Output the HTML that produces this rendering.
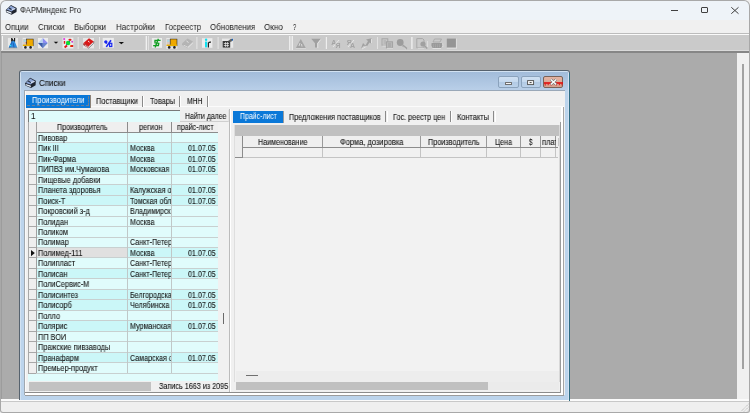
<!DOCTYPE html>
<html><head><meta charset="utf-8">
<style>
*{margin:0;padding:0;box-sizing:border-box}
html,body{width:750px;height:413px;overflow:hidden;background:#f0f0f0;font-family:"Liberation Sans",sans-serif;color:#000}
.a{position:absolute}
.t{position:absolute;white-space:nowrap;line-height:1;font-size:8px;will-change:transform;-webkit-text-stroke-width:0.1px}
svg{position:absolute;overflow:visible}
</style></head><body>
<div class="a" style="left:0px;top:0px;width:750px;height:413px;background:#a8a8a8;border-radius:6px 6px 3px 3px"></div>
<div class="a" style="left:1px;top:1px;width:748px;height:19px;background:#eef3f8;border-radius:5px 5px 0 0"></div>
<svg style="left:0;top:0" width="20" height="20" viewBox="0 0 20 20">
<path d="M5.8 10 L11 5 L16.7 8 L16.5 12 L11.5 14.7 L6 12.3 Z" fill="#1e2430"/>
<path d="M6.6 9.6 L11 5.8 L15.8 8.4 L11.4 11.6 Z" fill="#8ea6d6"/>
<path d="M6.3 10.6 L11.3 12.2 L11.5 14 L6.6 12 Z" fill="#e6eef8"/>
<path d="M11.8 9.4 L15.2 8.8" stroke="#f0f4fa" stroke-width="0.9"/>
<path d="M9 8 L11.5 9.5" stroke="#202838" stroke-width="1.1"/>
</svg>
<div class="t" style="left:20.30px;top:6.05px;font-size:8.5px;color:#1c1c1c;transform:scaleX(0.9053);transform-origin:0 0;-webkit-text-stroke-width:0">ФАРМиндекс Pro</div>
<div class="a" style="left:671px;top:10px;width:7px;height:1px;background:#404040"></div>
<div class="a" style="left:701px;top:7px;width:7px;height:6px;border:1px solid #404040;border-radius:1px"></div>
<svg style="left:731px;top:6.5px" width="8" height="7"><path d="M0.3 0.3L7.5 6.7M7.5 0.3L0.3 6.7" stroke="#404040" stroke-width="1"/></svg>
<div class="a" style="left:1px;top:20px;width:748px;height:13.1px;background:#f0f0f0"></div>
<div class="t" style="left:4.80px;top:22.67px;font-size:9px;color:#1a1a1a;transform:scaleX(0.8678);transform-origin:0 0;-webkit-text-stroke-width:0">Опции</div>
<div class="t" style="left:38.00px;top:22.67px;font-size:9px;color:#1a1a1a;transform:scaleX(0.8841);transform-origin:0 0;-webkit-text-stroke-width:0">Списки</div>
<div class="t" style="left:74.00px;top:22.67px;font-size:9px;color:#1a1a1a;transform:scaleX(0.8742);transform-origin:0 0;-webkit-text-stroke-width:0">Выборки</div>
<div class="t" style="left:115.90px;top:22.67px;font-size:9px;color:#1a1a1a;transform:scaleX(0.8815);transform-origin:0 0;-webkit-text-stroke-width:0">Настройки</div>
<div class="t" style="left:164.70px;top:22.67px;font-size:9px;color:#1a1a1a;transform:scaleX(0.8487);transform-origin:0 0;-webkit-text-stroke-width:0">Госреестр</div>
<div class="t" style="left:210.00px;top:22.67px;font-size:9px;color:#1a1a1a;transform:scaleX(0.8740);transform-origin:0 0;-webkit-text-stroke-width:0">Обновления</div>
<div class="t" style="left:264.00px;top:22.67px;font-size:9px;color:#1a1a1a;transform:scaleX(0.8988);transform-origin:0 0;-webkit-text-stroke-width:0">Окно</div>
<div class="t" style="left:292.70px;top:22.67px;font-size:9px;color:#1a1a1a;transform:scaleX(0.6395);transform-origin:0 0;-webkit-text-stroke-width:0">?</div>
<div class="a" style="left:1px;top:33.1px;width:748px;height:0.8px;background:#bcbcbc"></div>
<div class="a" style="left:1px;top:33.9px;width:748px;height:0.8px;background:#fafafa"></div>
<div class="a" style="left:1px;top:34.7px;width:748px;height:15.1px;background:#cacaca"></div>
<div class="a" style="left:1px;top:49.8px;width:748px;height:1px;background:#dadada"></div>
<div class="a" style="left:1px;top:50.8px;width:748px;height:0.6px;background:#c4c4c4"></div>
<div class="a" style="left:1px;top:51.4px;width:748px;height:1.2px;background:#868686"></div>
<svg style="left:0;top:0" width="750" height="60" viewBox="0 0 750 60">
<!-- grips -->
<rect x="2" y="36" width="1" height="14" fill="#f4f4f4"/>
<rect x="145.7" y="36" width="1.2" height="14" fill="#f4f4f4"/><rect x="148" y="36" width="1" height="14" fill="#e0e0e0"/>
<rect x="289.2" y="36" width="1.2" height="14" fill="#f4f4f4"/><rect x="291.6" y="36" width="1.2" height="14" fill="#f4f4f4"/>
<!-- separators -->
<rect x="77.7" y="37" width="1" height="12" fill="#e6e6e6"/>
<rect x="99" y="37" width="1" height="12" fill="#e6e6e6"/>
<rect x="196.4" y="37" width="1" height="12" fill="#e6e6e6"/>
<rect x="217.6" y="37" width="1" height="12" fill="#e6e6e6"/>
<rect x="325.8" y="37" width="1.2" height="12" fill="#eeeeee"/>
<rect x="377" y="37" width="1" height="12" fill="#e2e2e2"/>
<rect x="411.2" y="37" width="1.4" height="12" fill="#eeeeee"/>
<!-- 1 flask -->
<rect x="7.9" y="37.9" width="10.1" height="9.8" fill="#e8e8e8"/>
<path d="M11.8 40.6 L14.4 40.6 L17.3 47.7 L8.7 47.7 Z" fill="#2f8ce0"/>
<path d="M12 42 L9.6 47.5 M13.2 43 L14 47.5" stroke="#1c5cb0" stroke-width="0.9"/>
<circle cx="10.4" cy="45.5" r="0.8" fill="#30e8f0"/>
<path d="M11.7 38 L11.7 41.4 M14.6 38 L14.6 41.4 M11.7 38.4 L13.4 41" stroke="#141414" stroke-width="1.1"/>
<path d="M8.7 47.8 L17.3 47.8" stroke="#707070" stroke-width="0.5"/>
<!-- 2 truck -->
<rect x="22.6" y="37.8" width="10.8" height="11" fill="#e8e8e8"/>
<path d="M23.2 39 L26.8 39 L26.8 45.8 L23.2 45.8 Z" fill="#d8c8c0"/>
<rect x="23.6" y="39.6" width="2.2" height="2.4" fill="#a8d8e8"/>
<rect x="25.8" y="42" width="1" height="1.4" fill="#e02020"/>
<rect x="26.6" y="39" width="6.6" height="6.8" fill="#f0a800" stroke="#222" stroke-width="0.6"/>
<rect x="22.8" y="44.6" width="10.4" height="1.4" fill="#e8b000"/>
<circle cx="25.4" cy="47.4" r="1.3" fill="#222"/><circle cx="30.6" cy="47.4" r="1.3" fill="#222"/>
<!-- 3 diamond -->
<rect x="38" y="38" width="10" height="10.3" fill="#ececec"/>
<path d="M42.8 38 L38 43 L42.8 43 Z" fill="#b8d2f0"/>
<path d="M42.8 38 L47.8 43 L42.8 43 Z" fill="#8c8cf2"/>
<path d="M38 43 L42.8 48.3 L42.8 43 Z" fill="#3a5aa8"/>
<path d="M47.8 43 L42.8 48.3 L42.8 43 Z" fill="#6a86d0"/>
<path d="M53.7 41.7 L58.2 41.7 L56 43.8 Z" fill="#111"/>
<!-- 4 molecule -->
<rect x="62.5" y="37.6" width="10.9" height="10.9" fill="#ececec"/>
<circle cx="64.2" cy="39.1" r="1.1" fill="#e040e0"/>
<ellipse cx="70" cy="39.8" rx="1.6" ry="1.1" fill="#e01818"/>
<rect x="63.8" y="41" width="1.4" height="2.8" fill="#e01818"/>
<circle cx="68.1" cy="43" r="2.2" fill="#10e030"/>
<circle cx="66.6" cy="44.6" r="0.5" fill="#1840c0"/><circle cx="69.4" cy="41.4" r="0.5" fill="#1840c0"/>
<circle cx="72.2" cy="41.7" r="1" fill="#d040d0"/>
<path d="M64.6 47.6 L67 45.6" stroke="#e01818" stroke-width="2"/>
<rect x="70.2" y="45" width="3" height="2" fill="#e02018"/>
<circle cx="70.6" cy="45.2" r="0.5" fill="#f0c000"/>
<!-- 5 red book -->
<rect x="83" y="38" width="11" height="10.3" fill="#e6e6e6"/>
<path d="M83.5 43 L89 38.3 L93.8 41.5 L88.5 46.5 Z" fill="#d81818"/>
<path d="M83.5 43 L88.5 46.5 L88.5 48.2 L83.3 45 Z" fill="#a01010"/>
<path d="M84.5 45 L88.4 47.4 L93.5 43" stroke="#ffffff" stroke-width="0.7" fill="none"/>
<path d="M93.8 41.5 L93.6 43.3 L88.5 48.2" stroke="#505050" stroke-width="0.7" fill="none"/>
<path d="M88 41 L89.5 42.2" stroke="#fff" stroke-width="0.9"/>
<!-- 6 percent -->
<rect x="102.7" y="37.9" width="11.2" height="9.8" fill="#ececec"/>
<circle cx="105.9" cy="41.8" r="1.6" fill="#1a28f0"/>
<path d="M104.6 41.6 L106.8 43.6" stroke="#1a28f0" stroke-width="1.3"/>
<path d="M111 40.2 L106.3 46.9" stroke="#1a28f0" stroke-width="1.6"/>
<rect x="109.6" y="43.3" width="2.2" height="3.2" fill="none" stroke="#1a28f0" stroke-width="1.2"/>
<path d="M118.7 42 L124 42 L121.4 44.3 Z" fill="#111"/>
<!-- 7 dollar -->
<rect x="151.9" y="38" width="10.1" height="9.9" fill="#ececec"/>
<path d="M153.4 45.8 L157.6 44.2 M154.3 41.5 L157 40.5" stroke="#a8a8b8" stroke-width="1"/>
<path d="M160.6 40.4 H155 V42.8 L158.8 43.2 L158.4 45.6 H153.2" stroke="#10a020" stroke-width="1.3" fill="none"/>
<path d="M158.4 38.8 L155.1 47.6" stroke="#10a020" stroke-width="1.3"/>
<!-- 8 truck -->
<rect x="166.3" y="38" width="11" height="10.8" fill="#e8e8e8"/>
<path d="M166.8 39 L170.4 39 L170.4 45.8 L166.8 45.8 Z" fill="#d8c8c0"/>
<rect x="167.2" y="39.6" width="2.2" height="2.4" fill="#a8d8e8"/>
<rect x="170.2" y="39" width="6.8" height="6.8" fill="#f0a800" stroke="#222" stroke-width="0.6"/>
<rect x="166.5" y="44.6" width="10.6" height="1.4" fill="#e8b000"/>
<circle cx="169.2" cy="47.4" r="1.3" fill="#222"/><circle cx="174.4" cy="47.4" r="1.3" fill="#222"/>
<!-- 9 gray book disabled -->
<path d="M182.5 43 L187.5 38.5 L193 41.5 L188 46.5 Z" fill="#b4b4b4"/>
<path d="M182.5 43 L188 46.5 L188 48.2 L182.3 45 Z" fill="#a8a8a8"/>
<path d="M183.5 45 L188 47.4 L192.8 43" stroke="#f0f0f0" stroke-width="0.7" fill="none"/>
<path d="M186.5 41 L188.5 42.5" stroke="#e8e8e8" stroke-width="0.9"/>
<!-- 10 info -->
<rect x="202" y="38.2" width="10.4" height="9.6" fill="#ececec"/>
<rect x="205" y="41.6" width="2.2" height="5.8" fill="#10e0f0"/>
<circle cx="206.1" cy="39.8" r="1.2" fill="#10e0f0"/>
<path d="M208.4 47.4 L208.4 43 Q209 42 211 42.2" stroke="#222" stroke-width="1.2" fill="none"/>
<!-- 11 calc -->
<rect x="222" y="38.6" width="11.2" height="9.2" fill="#e8e8e8"/>
<rect x="222.6" y="41" width="7.6" height="6.6" fill="#3a3a3a"/>
<path d="M223.8 43.5 H229 M223.8 45.5 H229 M225.6 42 V47 M227.6 42 V47" stroke="#f0f0f0" stroke-width="0.7"/>
<path d="M228 41 L231 38.8 L233 39.6 L231 42" fill="#606060"/>
<rect x="231.8" y="38.8" width="1.2" height="1.8" fill="#1060c0"/>
<!-- 12 triangle -->
<path d="M300.8 39 L306 48.4 L295.6 48.4 Z" fill="#a4a4a4"/>
<path d="M300 43 L299 46 M301.5 44 L302 46.5" stroke="#e8e8e8" stroke-width="0.8"/>
<path d="M295.6 48.6 L306 48.6" stroke="#f0f0f0" stroke-width="0.6"/>
<!-- 13 funnel -->
<path d="M311.2 38.8 L320.8 38.8 L317 43.2 L317 47.6 L315 47.6 L315 43.2 Z" fill="#a0a0a0"/>
<path d="M320.8 39.5 L317.8 43.5 L317.8 48" stroke="#eeeeee" stroke-width="0.7" fill="none"/>
<!-- 14 sort AZ -->
<text x="331.2" y="45.2" font-family="Liberation Sans" font-size="7" font-weight="bold" fill="#a4a4a4">A</text>
<text x="335.6" y="48" font-family="Liberation Sans" font-size="7" font-weight="bold" fill="#a4a4a4">Я</text>
<path d="M333 47 L339 40" stroke="#eeeeee" stroke-width="0.8"/>
<!-- 15 sort 2 -->
<text x="346.7" y="45" font-family="Liberation Sans" font-size="7" font-weight="bold" fill="#a4a4a4">Я</text>
<text x="350" y="48.4" font-family="Liberation Sans" font-size="7" font-weight="bold" fill="#a4a4a4">A</text>
<path d="M348 47 L354 40" stroke="#eeeeee" stroke-width="0.8"/>
<!-- 16 diagonal arrow -->
<path d="M361 48.5 L363 43 L365.5 45.5 L368 41 L366 39.5 L371.5 38.3 L371 43.5 L369.5 42.5 L366.5 47 L364 45.5 Z" fill="#a0a0a0"/>
<path d="M362 49 L367 46 M371.5 39 L371.5 43" stroke="#eeeeee" stroke-width="0.7"/>
<!-- 17 copy -->
<rect x="382" y="38.8" width="5.8" height="6.4" fill="none" stroke="#a6a6a6" stroke-width="1"/>
<rect x="386.4" y="41.8" width="6.2" height="6" fill="#b8b8b8" stroke="#a0a0a0" stroke-width="0.9"/>
<path d="M383.5 41 H386 M383.5 43 H386 M388 44 H391 M388 46 H391" stroke="#909090" stroke-width="0.6"/>
<path d="M382.5 46 H386 M387 48.3 H393" stroke="#eeeeee" stroke-width="0.6"/>
<!-- 18 magnifier -->
<circle cx="400.2" cy="42.5" r="3.4" fill="#9c9c9c"/>
<path d="M402.6 45.2 L406.8 48.8" stroke="#a0a0a0" stroke-width="1.8"/>
<path d="M403.5 47 L406 49.3" stroke="#eeeeee" stroke-width="0.6"/>
<!-- 19 page preview -->
<path d="M416.8 38.6 L422.6 38.6 L424 40 L424 48 L416.8 48 Z" fill="none" stroke="#a8a8a8" stroke-width="1"/>
<circle cx="423" cy="44" r="2.6" fill="#a0a0a0"/>
<path d="M424.8 46 L427.2 48.5" stroke="#a0a0a0" stroke-width="1.3"/>
<path d="M417.5 48.6 H424 M427.6 41 V47" stroke="#eeeeee" stroke-width="0.6"/>
<!-- 20 printer -->
<path d="M434.5 39 L441.5 39 L440 42 L433 42 Z" fill="none" stroke="#a8a8a8" stroke-width="0.9"/>
<path d="M431.6 43 L441.8 43 L442.6 45.5 L441 48 L432.6 48 L431.4 45.5 Z" fill="#9a9a9a"/>
<path d="M433 45 H440 M433 46.8 H440" stroke="#b8b8b8" stroke-width="0.6" stroke-dasharray="1 1"/>
<path d="M432.5 48.5 H441 M442.8 43.5 V47" stroke="#eeeeee" stroke-width="0.6"/>
<!-- 21 square -->
<rect x="446.8" y="38.6" width="9.4" height="9.2" fill="#959595"/>
<path d="M446.8 48.1 H456.8 M456.4 38.6 V48.2" stroke="#eeeeee" stroke-width="0.7"/>
</svg>
<div class="a" style="left:1px;top:52.6px;width:736px;height:346px;background:#ababab"></div>
<div class="a" style="left:1px;top:52.6px;width:1.2px;height:346px;background:#9c9c9c"></div>
<div class="a" style="left:737px;top:52.6px;width:12px;height:346px;background:#f0f0f0"></div>
<div class="a" style="left:741.8px;top:63.8px;width:2px;height:305px;background:#a2a2a2"></div>
<div class="a" style="left:1px;top:398.5px;width:748px;height:2.5px;background:#fbfbfb"></div>
<div class="a" style="left:1px;top:401px;width:748px;height:1px;background:#c8c8c8"></div>
<div class="a" style="left:1px;top:402px;width:748px;height:10px;background:#efefef;border-radius:0 0 2px 2px"></div>
<svg style="left:738px;top:401px" width="11" height="11"><path d="M10.5 3 L3 10.5 M10.5 6 L6 10.5 M10.5 9 L9 10.5" stroke="#a8a8a8" stroke-width="0.9" stroke-dasharray="1 0.8"/></svg>
<div class="a" style="left:19.1px;top:70px;width:551px;height:330px;background:#56626e;border-radius:3px 3px 0 0"></div>
<div class="a" style="left:20.1px;top:71px;width:549px;height:329px;background:#d2e2f2;border-radius:2px 2px 0 0"></div>
<div class="a" style="left:20.900000000000002px;top:71.8px;width:547.4px;height:328px;background:#bcd4ec"></div>
<div class="a" style="left:20.900000000000002px;top:71.8px;width:547.4px;height:18.4px;background:linear-gradient(#a2bcda,#b9cfe8)"></div>
<div class="a" style="left:568.9px;top:73px;width:1.2px;height:328px;background:#2e6a80"></div>
<svg style="left:0;top:0" width="40" height="92" viewBox="0 0 40 92">
<path d="M25 83.3 L30.2 77.8 L35.8 80.8 L35.6 85.3 L31 88 L25.4 85.6 Z" fill="#1e2430"/>
<path d="M25.9 83 L30.3 78.6 L35 81.2 L30.6 84.6 Z" fill="#8ea6d6"/>
<path d="M25.6 84 L30.6 85.5 L30.9 87.2 L25.9 85.3 Z" fill="#e6eef8"/>
<path d="M31 82.4 L34.6 81.6" stroke="#f0f4fa" stroke-width="0.9"/>
<path d="M28.2 81 L30.8 82.6" stroke="#202838" stroke-width="1.1"/>
</svg>
<div class="t" style="left:38.60px;top:79.15px;font-size:8.5px;color:#151515;transform:scaleX(0.9361);transform-origin:0 0;">Списки</div>
<div class="a" style="left:498.3px;top:76.4px;width:20.5px;height:11.2px;background:linear-gradient(#cfe0f2 0%,#c4d8ee 50%,#b2cae4 51%,#bcd2ea 100%);border:1px solid #8aa2bc;border-radius:2px"></div>
<div class="a" style="left:520.7px;top:76.4px;width:20.3px;height:11.2px;background:linear-gradient(#cfe0f2 0%,#c4d8ee 50%,#b2cae4 51%,#bcd2ea 100%);border:1px solid #8aa2bc;border-radius:2px"></div>
<div class="a" style="left:543.1px;top:76.4px;width:20.3px;height:11.2px;background:linear-gradient(#e4b4a2 0%,#dcaa98 50%,#d49a88 51%,#d8a492 100%);border:1px solid #7a6258;border-radius:2px"></div>
<div class="a" style="left:505px;top:82.2px;width:7px;height:2.4px;background:#f4f4f4;border:0.7px solid #707070;border-radius:0.5px"></div>
<svg style="left:527px;top:79.5px" width="8" height="6"><rect x="0.6" y="0.6" width="6" height="4" fill="#f6f6f6" stroke="#505050" stroke-width="0.9"/><rect x="2.6" y="2" width="2" height="1.1" fill="#505050"/></svg>
<svg style="left:544px;top:81.6px" width="19" height="4"><path d="M0 1 H19" stroke="#e01010" stroke-width="1.6"/><path d="M1.2 1.5 V3.6 M4.2 1.5 V3.2 M7 1.5 V3.4 M12.4 1.5 V3.4 M15.4 1.5 V3.2 M18 1.5 V3.4" stroke="#e01818" stroke-width="1"/></svg>
<svg style="left:549.5px;top:79px" width="7" height="6"><path d="M0.8 0.5L6.2 5.5M6.2 0.5L0.8 5.5" stroke="#707070" stroke-width="2.4"/><path d="M0.8 0.5L6.2 5.5M6.2 0.5L0.8 5.5" stroke="#fff" stroke-width="1.4"/></svg>
<div class="a" style="left:24px;top:89.8px;width:540.6px;height:305.6px;background:#f0f0f0;border-top:1px solid #9aa8b8;border-left:0.7px solid #a0a8b0"></div>
<div class="a" style="left:24.7px;top:90.8px;width:0.9px;height:303px;background:#fafafa"></div>
<div class="a" style="left:26px;top:95px;width:64.7px;height:12.8px;background:#0a78d8"></div>
<div class="a" style="left:27.4px;top:96.2px;width:62px;height:9.4px;border-right:1px dashed #c08a60;border-bottom:1px dashed #c08a60;opacity:0.55"></div>
<div class="a" style="left:90.1px;top:95px;width:0.9px;height:12.8px;background:#8c8278"></div>
<div class="t" style="left:32.00px;top:96.50px;font-size:8.2px;color:#ffffff;transform:scaleX(0.8981);transform-origin:0 0;-webkit-text-stroke-width:0">Производители</div>
<div class="t" style="left:96.00px;top:98.00px;font-size:8.2px;color:#151515;transform:scaleX(0.9006);transform-origin:0 0;">Поставщики</div>
<div class="t" style="left:150.00px;top:98.00px;font-size:8.2px;color:#151515;transform:scaleX(0.8863);transform-origin:0 0;">Товары</div>
<div class="t" style="left:186.60px;top:98.00px;font-size:8.2px;color:#151515;transform:scaleX(0.8248);transform-origin:0 0;">МНН</div>
<div class="a" style="left:91px;top:106.4px;width:473px;height:0.9px;background:#fbfbfb"></div>
<div class="a" style="left:142px;top:95.6px;width:1.2px;height:11.2px;background:#8a8a8a"></div>
<div class="a" style="left:143.2px;top:95.6px;width:0.8px;height:11.2px;background:#ffffff"></div>
<div class="a" style="left:179px;top:95.6px;width:1.2px;height:11.2px;background:#8a8a8a"></div>
<div class="a" style="left:180.2px;top:95.6px;width:0.8px;height:11.2px;background:#ffffff"></div>
<div class="a" style="left:207px;top:95.6px;width:1.2px;height:11.2px;background:#8a8a8a"></div>
<div class="a" style="left:208.2px;top:95.6px;width:0.8px;height:11.2px;background:#ffffff"></div>
<div class="a" style="left:28px;top:110px;width:151.5px;height:11.5px;background:#e0fcfc;border-top:1.2px solid #7a7a7a;border-left:1.4px solid #7a7a7a"></div>
<div class="t" style="left:30.80px;top:112.60px;font-size:8.2px;color:#111;transform:scaleX(0.9756);transform-origin:0 0;">1</div>
<div class="a" style="left:180.3px;top:109.6px;width:48.6px;height:12.3px;background:#eeeeee;border-bottom:1px solid #cfcfcf;border-right:1px solid #e2e2e2"></div>
<div class="t" style="left:185.00px;top:112.60px;font-size:8.2px;color:#151515;transform:scaleX(0.8482);transform-origin:0 0;">Найти далее</div>
<div class="a" style="left:28px;top:121.8px;width:190px;height:260px;background:#e0fcfc"></div>
<div class="a" style="left:28px;top:121.8px;width:190px;height:10.2px;background:#efefef"></div>
<div class="a" style="left:28px;top:131.7px;width:190px;height:1px;background:#8c8c8c"></div>
<div class="a" style="left:28px;top:121.8px;width:8.200000000000003px;height:251.5px;background:#efefef"></div>
<div class="t" style="left:57.00px;top:124.10px;font-size:8.2px;color:#161616;transform:scaleX(0.8668);transform-origin:0 0;">Производитель</div>
<div class="t" style="left:138.80px;top:124.10px;font-size:8.2px;color:#161616;transform:scaleX(0.9077);transform-origin:0 0;">регион</div>
<div class="t" style="left:177.00px;top:124.10px;font-size:8.2px;color:#161616;transform:scaleX(0.8650);transform-origin:0 0;">прайс-лист</div>
<div class="a" style="left:36.2px;top:132.88299999999998px;width:181.8px;height:10.467px;background:#e0fcfc"></div>
<div class="a" style="left:36.2px;top:142.35px;width:181.8px;height:1px;background:#c8d0d0"></div>
<div class="a" style="left:28px;top:142.35px;width:8.200000000000003px;height:1px;background:#a8a8a8"></div>
<div class="a" style="left:36.2px;top:0;width:91.1px;height:413px;overflow:hidden">
<div class="t" style="left:1.70px;top:134.78px;font-size:8.2px;color:#161616;transform:scaleX(0.8976);transform-origin:0 0;">Пивовар</div>
</div>
<div class="a" style="left:36.2px;top:143.35px;width:181.8px;height:10.467px;background:#cbf7f8"></div>
<div class="a" style="left:36.2px;top:152.817px;width:181.8px;height:1px;background:#c8d0d0"></div>
<div class="a" style="left:28px;top:152.817px;width:8.200000000000003px;height:1px;background:#a8a8a8"></div>
<div class="a" style="left:36.2px;top:0;width:91.1px;height:413px;overflow:hidden">
<div class="t" style="left:1.70px;top:145.25px;font-size:8.2px;color:#161616;transform:scaleX(0.8976);transform-origin:0 0;">Пик III</div>
</div>
<div class="a" style="left:127.3px;top:0;width:44.000000000000014px;height:413px;overflow:hidden">
<div class="t" style="left:2.70px;top:145.25px;font-size:8.2px;color:#161616;transform:scaleX(0.8732);transform-origin:0 0;">Москва</div>
</div>
<div class="t" style="left:188.28px;top:145.25px;font-size:8.2px;color:#161616;transform:scaleX(0.8683);transform-origin:0 0;">01.07.05</div>
<div class="a" style="left:36.2px;top:153.81699999999998px;width:181.8px;height:10.467px;background:#cbf7f8"></div>
<div class="a" style="left:36.2px;top:163.284px;width:181.8px;height:1px;background:#c8d0d0"></div>
<div class="a" style="left:28px;top:163.284px;width:8.200000000000003px;height:1px;background:#a8a8a8"></div>
<div class="a" style="left:36.2px;top:0;width:91.1px;height:413px;overflow:hidden">
<div class="t" style="left:1.70px;top:155.72px;font-size:8.2px;color:#161616;transform:scaleX(0.8976);transform-origin:0 0;">Пик-Фарма</div>
</div>
<div class="a" style="left:127.3px;top:0;width:44.000000000000014px;height:413px;overflow:hidden">
<div class="t" style="left:2.70px;top:155.72px;font-size:8.2px;color:#161616;transform:scaleX(0.8732);transform-origin:0 0;">Москва</div>
</div>
<div class="t" style="left:188.28px;top:155.72px;font-size:8.2px;color:#161616;transform:scaleX(0.8683);transform-origin:0 0;">01.07.05</div>
<div class="a" style="left:36.2px;top:164.284px;width:181.8px;height:10.467px;background:#cbf7f8"></div>
<div class="a" style="left:36.2px;top:173.751px;width:181.8px;height:1px;background:#c8d0d0"></div>
<div class="a" style="left:28px;top:173.751px;width:8.200000000000003px;height:1px;background:#a8a8a8"></div>
<div class="a" style="left:36.2px;top:0;width:91.1px;height:413px;overflow:hidden">
<div class="t" style="left:1.70px;top:166.18px;font-size:8.2px;color:#161616;transform:scaleX(0.8976);transform-origin:0 0;">ПИПВЗ им.Чумакова</div>
</div>
<div class="a" style="left:127.3px;top:0;width:44.000000000000014px;height:413px;overflow:hidden">
<div class="t" style="left:2.70px;top:166.18px;font-size:8.2px;color:#161616;transform:scaleX(0.8732);transform-origin:0 0;">Московская</div>
</div>
<div class="t" style="left:188.28px;top:166.18px;font-size:8.2px;color:#161616;transform:scaleX(0.8683);transform-origin:0 0;">01.07.05</div>
<div class="a" style="left:36.2px;top:174.75099999999998px;width:181.8px;height:10.467px;background:#e0fcfc"></div>
<div class="a" style="left:36.2px;top:184.218px;width:181.8px;height:1px;background:#c8d0d0"></div>
<div class="a" style="left:28px;top:184.218px;width:8.200000000000003px;height:1px;background:#a8a8a8"></div>
<div class="a" style="left:36.2px;top:0;width:91.1px;height:413px;overflow:hidden">
<div class="t" style="left:1.70px;top:176.65px;font-size:8.2px;color:#161616;transform:scaleX(0.8976);transform-origin:0 0;">Пищевые добавки</div>
</div>
<div class="a" style="left:36.2px;top:185.218px;width:181.8px;height:10.467px;background:#cbf7f8"></div>
<div class="a" style="left:36.2px;top:194.685px;width:181.8px;height:1px;background:#c8d0d0"></div>
<div class="a" style="left:28px;top:194.685px;width:8.200000000000003px;height:1px;background:#a8a8a8"></div>
<div class="a" style="left:36.2px;top:0;width:91.1px;height:413px;overflow:hidden">
<div class="t" style="left:1.70px;top:187.12px;font-size:8.2px;color:#161616;transform:scaleX(0.8976);transform-origin:0 0;">Планета здоровья</div>
</div>
<div class="a" style="left:127.3px;top:0;width:44.000000000000014px;height:413px;overflow:hidden">
<div class="t" style="left:2.70px;top:187.12px;font-size:8.2px;color:#161616;transform:scaleX(0.8732);transform-origin:0 0;">Калужская о</div>
</div>
<div class="t" style="left:188.28px;top:187.12px;font-size:8.2px;color:#161616;transform:scaleX(0.8683);transform-origin:0 0;">01.07.05</div>
<div class="a" style="left:36.2px;top:195.68499999999997px;width:181.8px;height:10.467px;background:#cbf7f8"></div>
<div class="a" style="left:36.2px;top:205.152px;width:181.8px;height:1px;background:#c8d0d0"></div>
<div class="a" style="left:28px;top:205.152px;width:8.200000000000003px;height:1px;background:#a8a8a8"></div>
<div class="a" style="left:36.2px;top:0;width:91.1px;height:413px;overflow:hidden">
<div class="t" style="left:1.70px;top:197.59px;font-size:8.2px;color:#161616;transform:scaleX(0.8976);transform-origin:0 0;">Поиск-Т</div>
</div>
<div class="a" style="left:127.3px;top:0;width:44.000000000000014px;height:413px;overflow:hidden">
<div class="t" style="left:2.70px;top:197.59px;font-size:8.2px;color:#161616;transform:scaleX(0.8732);transform-origin:0 0;">Томская обл</div>
</div>
<div class="t" style="left:188.28px;top:197.59px;font-size:8.2px;color:#161616;transform:scaleX(0.8683);transform-origin:0 0;">01.07.05</div>
<div class="a" style="left:36.2px;top:206.152px;width:181.8px;height:10.467px;background:#e0fcfc"></div>
<div class="a" style="left:36.2px;top:215.619px;width:181.8px;height:1px;background:#c8d0d0"></div>
<div class="a" style="left:28px;top:215.619px;width:8.200000000000003px;height:1px;background:#a8a8a8"></div>
<div class="a" style="left:36.2px;top:0;width:91.1px;height:413px;overflow:hidden">
<div class="t" style="left:1.70px;top:208.05px;font-size:8.2px;color:#161616;transform:scaleX(0.8976);transform-origin:0 0;">Покровский з-д</div>
</div>
<div class="a" style="left:127.3px;top:0;width:44.000000000000014px;height:413px;overflow:hidden">
<div class="t" style="left:2.70px;top:208.05px;font-size:8.2px;color:#161616;transform:scaleX(0.8732);transform-origin:0 0;">Владимирск.</div>
</div>
<div class="a" style="left:36.2px;top:216.619px;width:181.8px;height:10.467px;background:#e0fcfc"></div>
<div class="a" style="left:36.2px;top:226.086px;width:181.8px;height:1px;background:#c8d0d0"></div>
<div class="a" style="left:28px;top:226.086px;width:8.200000000000003px;height:1px;background:#a8a8a8"></div>
<div class="a" style="left:36.2px;top:0;width:91.1px;height:413px;overflow:hidden">
<div class="t" style="left:1.70px;top:218.52px;font-size:8.2px;color:#161616;transform:scaleX(0.8976);transform-origin:0 0;">Полидан</div>
</div>
<div class="a" style="left:127.3px;top:0;width:44.000000000000014px;height:413px;overflow:hidden">
<div class="t" style="left:2.70px;top:218.52px;font-size:8.2px;color:#161616;transform:scaleX(0.8732);transform-origin:0 0;">Москва</div>
</div>
<div class="a" style="left:36.2px;top:227.08599999999998px;width:181.8px;height:10.467px;background:#e0fcfc"></div>
<div class="a" style="left:36.2px;top:236.553px;width:181.8px;height:1px;background:#c8d0d0"></div>
<div class="a" style="left:28px;top:236.553px;width:8.200000000000003px;height:1px;background:#a8a8a8"></div>
<div class="a" style="left:36.2px;top:0;width:91.1px;height:413px;overflow:hidden">
<div class="t" style="left:1.70px;top:228.99px;font-size:8.2px;color:#161616;transform:scaleX(0.8976);transform-origin:0 0;">Поликом</div>
</div>
<div class="a" style="left:36.2px;top:237.55299999999997px;width:181.8px;height:10.467px;background:#e0fcfc"></div>
<div class="a" style="left:36.2px;top:247.01999999999998px;width:181.8px;height:1px;background:#c8d0d0"></div>
<div class="a" style="left:28px;top:247.01999999999998px;width:8.200000000000003px;height:1px;background:#a8a8a8"></div>
<div class="a" style="left:36.2px;top:0;width:91.1px;height:413px;overflow:hidden">
<div class="t" style="left:1.70px;top:239.45px;font-size:8.2px;color:#161616;transform:scaleX(0.8976);transform-origin:0 0;">Полимар</div>
</div>
<div class="a" style="left:127.3px;top:0;width:44.000000000000014px;height:413px;overflow:hidden">
<div class="t" style="left:2.70px;top:239.45px;font-size:8.2px;color:#161616;transform:scaleX(0.8732);transform-origin:0 0;">Санкт-Петер</div>
</div>
<div class="a" style="left:36.2px;top:248.01999999999995px;width:91.1px;height:10.467px;background:#e0e0e0"></div>
<div class="a" style="left:127.3px;top:248.01999999999995px;width:90.7px;height:10.467px;background:#cbf7f8"></div>
<svg style="left:30.8px;top:249.92px" width="5" height="7"><path d="M0 0L3.8 3.1L0 6.2Z" fill="#111"/></svg>
<div class="a" style="left:36.2px;top:257.48699999999997px;width:181.8px;height:1px;background:#c8d0d0"></div>
<div class="a" style="left:28px;top:257.48699999999997px;width:8.200000000000003px;height:1px;background:#a8a8a8"></div>
<div class="a" style="left:36.2px;top:0;width:91.1px;height:413px;overflow:hidden">
<div class="t" style="left:1.70px;top:249.92px;font-size:8.2px;color:#161616;transform:scaleX(0.8976);transform-origin:0 0;">Полимед-111</div>
</div>
<div class="a" style="left:127.3px;top:0;width:44.000000000000014px;height:413px;overflow:hidden">
<div class="t" style="left:2.70px;top:249.92px;font-size:8.2px;color:#161616;transform:scaleX(0.8732);transform-origin:0 0;">Москва</div>
</div>
<div class="t" style="left:188.28px;top:249.92px;font-size:8.2px;color:#161616;transform:scaleX(0.8683);transform-origin:0 0;">01.07.05</div>
<div class="a" style="left:36.2px;top:258.487px;width:181.8px;height:10.467px;background:#e0fcfc"></div>
<div class="a" style="left:36.2px;top:267.954px;width:181.8px;height:1px;background:#c8d0d0"></div>
<div class="a" style="left:28px;top:267.954px;width:8.200000000000003px;height:1px;background:#a8a8a8"></div>
<div class="a" style="left:36.2px;top:0;width:91.1px;height:413px;overflow:hidden">
<div class="t" style="left:1.70px;top:260.39px;font-size:8.2px;color:#161616;transform:scaleX(0.8976);transform-origin:0 0;">Полипласт</div>
</div>
<div class="a" style="left:127.3px;top:0;width:44.000000000000014px;height:413px;overflow:hidden">
<div class="t" style="left:2.70px;top:260.39px;font-size:8.2px;color:#161616;transform:scaleX(0.8732);transform-origin:0 0;">Санкт-Петер</div>
</div>
<div class="a" style="left:36.2px;top:268.954px;width:181.8px;height:10.467px;background:#cbf7f8"></div>
<div class="a" style="left:36.2px;top:278.421px;width:181.8px;height:1px;background:#c8d0d0"></div>
<div class="a" style="left:28px;top:278.421px;width:8.200000000000003px;height:1px;background:#a8a8a8"></div>
<div class="a" style="left:36.2px;top:0;width:91.1px;height:413px;overflow:hidden">
<div class="t" style="left:1.70px;top:270.85px;font-size:8.2px;color:#161616;transform:scaleX(0.8976);transform-origin:0 0;">Полисан</div>
</div>
<div class="a" style="left:127.3px;top:0;width:44.000000000000014px;height:413px;overflow:hidden">
<div class="t" style="left:2.70px;top:270.85px;font-size:8.2px;color:#161616;transform:scaleX(0.8732);transform-origin:0 0;">Санкт-Петер</div>
</div>
<div class="t" style="left:188.28px;top:270.85px;font-size:8.2px;color:#161616;transform:scaleX(0.8683);transform-origin:0 0;">01.07.05</div>
<div class="a" style="left:36.2px;top:279.42100000000005px;width:181.8px;height:10.467px;background:#e0fcfc"></div>
<div class="a" style="left:36.2px;top:288.88800000000003px;width:181.8px;height:1px;background:#c8d0d0"></div>
<div class="a" style="left:28px;top:288.88800000000003px;width:8.200000000000003px;height:1px;background:#a8a8a8"></div>
<div class="a" style="left:36.2px;top:0;width:91.1px;height:413px;overflow:hidden">
<div class="t" style="left:1.70px;top:281.32px;font-size:8.2px;color:#161616;transform:scaleX(0.8976);transform-origin:0 0;">ПолиСервис-М</div>
</div>
<div class="a" style="left:36.2px;top:289.88800000000003px;width:181.8px;height:10.467px;background:#cbf7f8"></div>
<div class="a" style="left:36.2px;top:299.355px;width:181.8px;height:1px;background:#c8d0d0"></div>
<div class="a" style="left:28px;top:299.355px;width:8.200000000000003px;height:1px;background:#a8a8a8"></div>
<div class="a" style="left:36.2px;top:0;width:91.1px;height:413px;overflow:hidden">
<div class="t" style="left:1.70px;top:291.79px;font-size:8.2px;color:#161616;transform:scaleX(0.8976);transform-origin:0 0;">Полисинтез</div>
</div>
<div class="a" style="left:127.3px;top:0;width:44.000000000000014px;height:413px;overflow:hidden">
<div class="t" style="left:2.70px;top:291.79px;font-size:8.2px;color:#161616;transform:scaleX(0.8732);transform-origin:0 0;">Белгородска</div>
</div>
<div class="t" style="left:188.28px;top:291.79px;font-size:8.2px;color:#161616;transform:scaleX(0.8683);transform-origin:0 0;">01.07.05</div>
<div class="a" style="left:36.2px;top:300.355px;width:181.8px;height:10.467px;background:#cbf7f8"></div>
<div class="a" style="left:36.2px;top:309.822px;width:181.8px;height:1px;background:#c8d0d0"></div>
<div class="a" style="left:28px;top:309.822px;width:8.200000000000003px;height:1px;background:#a8a8a8"></div>
<div class="a" style="left:36.2px;top:0;width:91.1px;height:413px;overflow:hidden">
<div class="t" style="left:1.70px;top:302.26px;font-size:8.2px;color:#161616;transform:scaleX(0.8976);transform-origin:0 0;">Полисорб</div>
</div>
<div class="a" style="left:127.3px;top:0;width:44.000000000000014px;height:413px;overflow:hidden">
<div class="t" style="left:2.70px;top:302.26px;font-size:8.2px;color:#161616;transform:scaleX(0.8732);transform-origin:0 0;">Челябинска</div>
</div>
<div class="t" style="left:188.28px;top:302.26px;font-size:8.2px;color:#161616;transform:scaleX(0.8683);transform-origin:0 0;">01.07.05</div>
<div class="a" style="left:36.2px;top:310.822px;width:181.8px;height:10.467px;background:#e0fcfc"></div>
<div class="a" style="left:36.2px;top:320.289px;width:181.8px;height:1px;background:#c8d0d0"></div>
<div class="a" style="left:28px;top:320.289px;width:8.200000000000003px;height:1px;background:#a8a8a8"></div>
<div class="a" style="left:36.2px;top:0;width:91.1px;height:413px;overflow:hidden">
<div class="t" style="left:1.70px;top:312.72px;font-size:8.2px;color:#161616;transform:scaleX(0.8976);transform-origin:0 0;">Полло</div>
</div>
<div class="a" style="left:36.2px;top:321.289px;width:181.8px;height:10.467px;background:#cbf7f8"></div>
<div class="a" style="left:36.2px;top:330.756px;width:181.8px;height:1px;background:#c8d0d0"></div>
<div class="a" style="left:28px;top:330.756px;width:8.200000000000003px;height:1px;background:#a8a8a8"></div>
<div class="a" style="left:36.2px;top:0;width:91.1px;height:413px;overflow:hidden">
<div class="t" style="left:1.70px;top:323.19px;font-size:8.2px;color:#161616;transform:scaleX(0.8976);transform-origin:0 0;">Полярис</div>
</div>
<div class="a" style="left:127.3px;top:0;width:44.000000000000014px;height:413px;overflow:hidden">
<div class="t" style="left:2.70px;top:323.19px;font-size:8.2px;color:#161616;transform:scaleX(0.8732);transform-origin:0 0;">Мурманская</div>
</div>
<div class="t" style="left:188.28px;top:323.19px;font-size:8.2px;color:#161616;transform:scaleX(0.8683);transform-origin:0 0;">01.07.05</div>
<div class="a" style="left:36.2px;top:331.75600000000003px;width:181.8px;height:10.467px;background:#e0fcfc"></div>
<div class="a" style="left:36.2px;top:341.223px;width:181.8px;height:1px;background:#c8d0d0"></div>
<div class="a" style="left:28px;top:341.223px;width:8.200000000000003px;height:1px;background:#a8a8a8"></div>
<div class="a" style="left:36.2px;top:0;width:91.1px;height:413px;overflow:hidden">
<div class="t" style="left:1.70px;top:333.66px;font-size:8.2px;color:#161616;transform:scaleX(0.8976);transform-origin:0 0;">ПП ВОИ</div>
</div>
<div class="a" style="left:36.2px;top:342.223px;width:181.8px;height:10.467px;background:#e0fcfc"></div>
<div class="a" style="left:36.2px;top:351.69px;width:181.8px;height:1px;background:#c8d0d0"></div>
<div class="a" style="left:28px;top:351.69px;width:8.200000000000003px;height:1px;background:#a8a8a8"></div>
<div class="a" style="left:36.2px;top:0;width:91.1px;height:413px;overflow:hidden">
<div class="t" style="left:1.70px;top:344.12px;font-size:8.2px;color:#161616;transform:scaleX(0.8976);transform-origin:0 0;">Пражские пивзаводы</div>
</div>
<div class="a" style="left:36.2px;top:352.69000000000005px;width:181.8px;height:10.467px;background:#cbf7f8"></div>
<div class="a" style="left:36.2px;top:362.15700000000004px;width:181.8px;height:1px;background:#c8d0d0"></div>
<div class="a" style="left:28px;top:362.15700000000004px;width:8.200000000000003px;height:1px;background:#a8a8a8"></div>
<div class="a" style="left:36.2px;top:0;width:91.1px;height:413px;overflow:hidden">
<div class="t" style="left:1.70px;top:354.59px;font-size:8.2px;color:#161616;transform:scaleX(0.8976);transform-origin:0 0;">Пранафарм</div>
</div>
<div class="a" style="left:127.3px;top:0;width:44.000000000000014px;height:413px;overflow:hidden">
<div class="t" style="left:2.70px;top:354.59px;font-size:8.2px;color:#161616;transform:scaleX(0.8732);transform-origin:0 0;">Самарская о</div>
</div>
<div class="t" style="left:188.28px;top:354.59px;font-size:8.2px;color:#161616;transform:scaleX(0.8683);transform-origin:0 0;">01.07.05</div>
<div class="a" style="left:36.2px;top:363.15700000000004px;width:181.8px;height:10.467px;background:#e0fcfc"></div>
<div class="a" style="left:36.2px;top:372.624px;width:181.8px;height:1px;background:#c8d0d0"></div>
<div class="a" style="left:28px;top:372.624px;width:8.200000000000003px;height:1px;background:#a8a8a8"></div>
<div class="a" style="left:36.2px;top:0;width:91.1px;height:413px;overflow:hidden">
<div class="t" style="left:1.70px;top:365.06px;font-size:8.2px;color:#161616;transform:scaleX(0.8976);transform-origin:0 0;">Премьер-продукт</div>
</div>
<div class="a" style="left:126.8px;top:121.8px;width:1px;height:10.4px;background:#8c8c8c"></div>
<div class="a" style="left:126.8px;top:132.7px;width:1px;height:240.8px;background:#c0c8c8"></div>
<div class="a" style="left:170.8px;top:121.8px;width:1px;height:10.4px;background:#8c8c8c"></div>
<div class="a" style="left:170.8px;top:132.7px;width:1px;height:240.8px;background:#c0c8c8"></div>
<div class="a" style="left:35.7px;top:121.8px;width:1px;height:251.7px;background:#a0a0a0"></div>
<div class="a" style="left:27.9px;top:121.8px;width:0.8px;height:251.7px;background:#a8a8a8"></div>
<div class="a" style="left:28.9px;top:381.3px;width:200px;height:10px;background:#f0f0f0"></div>
<div class="a" style="left:29px;top:381.6px;width:122px;height:9.4px;background:#c2c2c2"></div>
<div class="t" style="left:158.70px;top:383.40px;font-size:8.2px;color:#151515;transform:scaleX(0.8821);transform-origin:0 0;">Запись 1663 из 2095</div>
<div class="a" style="left:218px;top:121.8px;width:11px;height:259.8px;background:#f1f1f1"></div>
<div class="a" style="left:223.2px;top:313px;width:1px;height:10.7px;background:#6a6a6a"></div>
<div class="a" style="left:229.2px;top:109px;width:1.2px;height:284px;background:#bcbcbc"></div>
<div class="a" style="left:230.4px;top:109px;width:0.8px;height:284px;background:#ffffff"></div>
<div class="a" style="left:24.5px;top:391.6px;width:536.3px;height:1px;background:#8c8c8c"></div>
<div class="a" style="left:24.5px;top:392.6px;width:539px;height:2px;background:#ffffff"></div>
<div class="a" style="left:24.5px;top:394.6px;width:539.5px;height:0.9px;background:#9c9c9c"></div>
<div class="a" style="left:232.9px;top:110.6px;width:50.4px;height:12.8px;background:#0a78d8"></div>
<div class="a" style="left:283.3px;top:110.6px;width:1.2px;height:12.8px;background:#9c9c9c"></div>
<div class="t" style="left:240.00px;top:112.80px;font-size:8.2px;color:#ffffff;transform:scaleX(0.8477);transform-origin:0 0;-webkit-text-stroke-width:0">Прайс-лист</div>
<div class="t" style="left:289.30px;top:113.50px;font-size:8.2px;color:#151515;transform:scaleX(0.8780);transform-origin:0 0;">Предложения поставщиков</div>
<div class="t" style="left:393.00px;top:113.50px;font-size:8.2px;color:#151515;transform:scaleX(0.8838);transform-origin:0 0;">Гос. реестр цен</div>
<div class="t" style="left:457.30px;top:113.50px;font-size:8.2px;color:#151515;transform:scaleX(0.9036);transform-origin:0 0;">Контакты</div>
<div class="a" style="left:385.3px;top:111.3px;width:1.2px;height:11px;background:#8a8a8a"></div>
<div class="a" style="left:386.5px;top:111.3px;width:0.8px;height:11px;background:#ffffff"></div>
<div class="a" style="left:450px;top:111.3px;width:1.2px;height:11px;background:#8a8a8a"></div>
<div class="a" style="left:451.2px;top:111.3px;width:0.8px;height:11px;background:#ffffff"></div>
<div class="a" style="left:493.3px;top:111.3px;width:1.2px;height:11px;background:#8a8a8a"></div>
<div class="a" style="left:494.5px;top:111.3px;width:0.8px;height:11px;background:#ffffff"></div>
<div class="a" style="left:234.4px;top:124.7px;width:324.80000000000007px;height:257.6px;background:#f2f2f2"></div>
<div class="a" style="left:233.8px;top:124.7px;width:1.2px;height:257.6px;background:#dedede"></div>
<div class="a" style="left:235.0px;top:124.7px;width:324.20000000000005px;height:11.5px;background:#c0c0c0"></div>
<div class="a" style="left:235.0px;top:136.2px;width:324.20000000000005px;height:10.6px;background:#efefef"></div>
<div class="a" style="left:235.0px;top:146.75px;width:323.40000000000003px;height:1px;background:#8c8c8c"></div>
<div class="a" style="left:235.0px;top:147.75px;width:324.20000000000005px;height:9.6px;background:#f1f1f1"></div>
<div class="a" style="left:235.0px;top:157.3px;width:323.40000000000003px;height:1px;background:#c4c4c4"></div>
<div class="a" style="left:235.0px;top:136.2px;width:6.999999999999995px;height:21.6px;background:#ededed"></div>
<div class="a" style="left:235.0px;top:157.3px;width:7.599999999999994px;height:1px;background:#8c8c8c"></div>
<div class="a" style="left:242px;top:136.2px;width:1px;height:22px;background:#8c8c8c"></div>
<div class="a" style="left:321.7px;top:136.2px;width:1px;height:10.8px;background:#9a9a9a"></div>
<div class="a" style="left:321.7px;top:147.7px;width:1px;height:10.4px;background:#c4c4c4"></div>
<div class="a" style="left:420.1px;top:136.2px;width:1px;height:10.8px;background:#9a9a9a"></div>
<div class="a" style="left:420.1px;top:147.7px;width:1px;height:10.4px;background:#c4c4c4"></div>
<div class="a" style="left:486.1px;top:136.2px;width:1px;height:10.8px;background:#9a9a9a"></div>
<div class="a" style="left:486.1px;top:147.7px;width:1px;height:10.4px;background:#c4c4c4"></div>
<div class="a" style="left:519.8px;top:136.2px;width:1px;height:10.8px;background:#9a9a9a"></div>
<div class="a" style="left:519.8px;top:147.7px;width:1px;height:10.4px;background:#c4c4c4"></div>
<div class="a" style="left:540.15px;top:136.2px;width:1px;height:10.8px;background:#9a9a9a"></div>
<div class="a" style="left:540.15px;top:147.7px;width:1px;height:10.4px;background:#c4c4c4"></div>
<div class="a" style="left:555.35px;top:136.2px;width:1px;height:10.8px;background:#9a9a9a"></div>
<div class="a" style="left:555.35px;top:147.7px;width:1px;height:10.4px;background:#c4c4c4"></div>
<div class="a" style="left:557.6px;top:138px;width:0.8px;height:8px;background:#c8c8c8"></div>
<div class="t" style="left:258.00px;top:138.60px;font-size:8.2px;color:#151515;transform:scaleX(0.8726);transform-origin:0 0;">Наименование</div>
<div class="t" style="left:340.00px;top:138.60px;font-size:8.2px;color:#151515;transform:scaleX(0.9150);transform-origin:0 0;">Форма, дозировка</div>
<div class="t" style="left:428.40px;top:138.60px;font-size:8.2px;color:#151515;transform:scaleX(0.8839);transform-origin:0 0;">Производитель</div>
<div class="t" style="left:495.00px;top:138.60px;font-size:8.2px;color:#151515;transform:scaleX(0.8620);transform-origin:0 0;">Цена</div>
<div class="t" style="left:528.90px;top:138.14px;font-size:8.6px;color:#151515;transform:scaleX(0.7111);transform-origin:0 0;">$</div>
<div class="a" style="left:541.6px;top:136.5px;width:14px;height:11px;overflow:hidden">
<div class="t" style="left:0.40px;top:2.10px;font-size:8.2px;color:#151515;transform:scaleX(0.9073);transform-origin:0 0;">плат</div>
</div>
<div class="a" style="left:235.70000000000002px;top:371px;width:323.50000000000006px;height:10.7px;background:#ededed"></div>
<div class="a" style="left:246.3px;top:375.2px;width:11.4px;height:0.9px;background:#707070"></div>
<div class="a" style="left:235.70000000000002px;top:382.3px;width:323.50000000000006px;height:7.6px;background:#ebebeb"></div>
<div class="a" style="left:235.70000000000002px;top:382.3px;width:252px;height:7.6px;background:#c0c0c0"></div>
<div class="a" style="left:559.2px;top:124.7px;width:1px;height:257px;background:#d8d8d8"></div>
<div class="a" style="left:560.3px;top:122px;width:1px;height:270.5px;background:#9a9a9a"></div>
<div class="a" style="left:561.3px;top:107px;width:1.9px;height:288px;background:#ffffff"></div>
<div class="a" style="left:563.2px;top:107px;width:0.9px;height:288.4px;background:#a4a4a4"></div>
</body></html>
